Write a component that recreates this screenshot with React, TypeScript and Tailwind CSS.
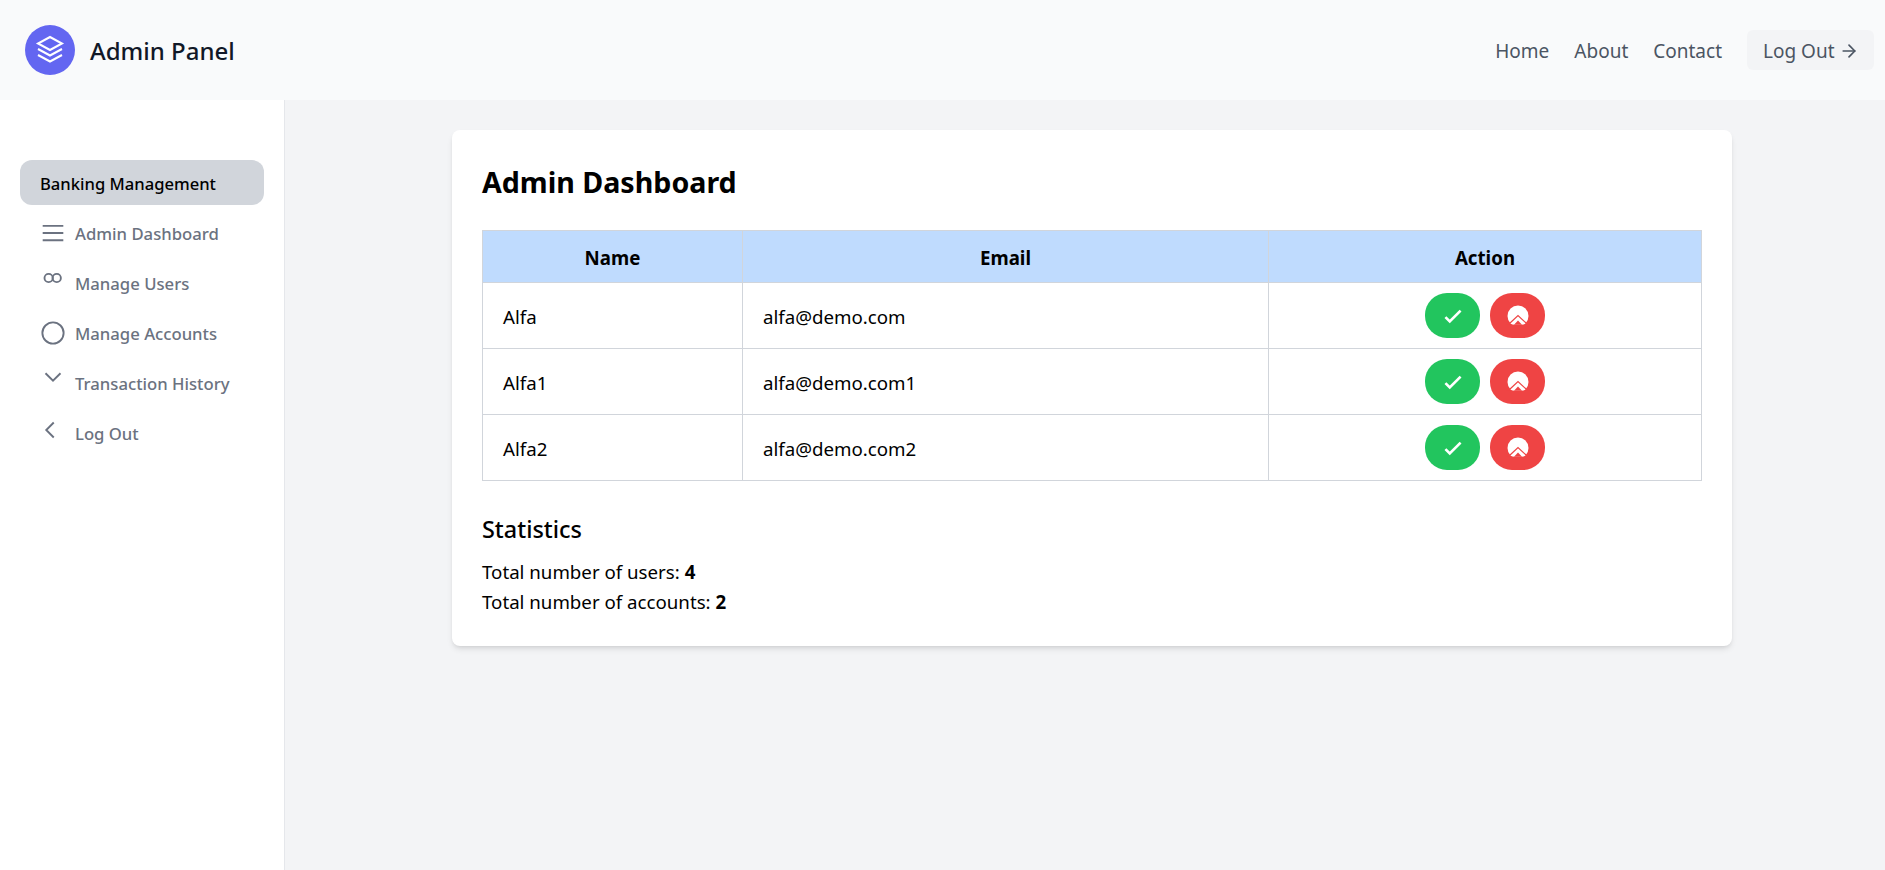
import { ArrowRight } from 'lucide-react'

const FONT = "font-['Noto_Sans',sans-serif]"

const LINK_CLS = 'text-[19px] text-[#4b5563] pt-[2px]'
const CELL_CLS = 'border border-[#d1d5db] px-5 pt-[3px]'

const USERS = [
  { name: 'Alfa', email: 'alfa@demo.com' },
  { name: 'Alfa1', email: 'alfa@demo.com1' },
  { name: 'Alfa2', email: 'alfa@demo.com2' },
]

const MENU = [
  {
    label: 'Admin Dashboard',
    icon: <path d="M3.750 6.250h16.500M3.750 12h16.500M3.750 17.750h16.500" />,
    iconCls: '',
  },
  {
    label: 'Manage Users',
    icon: (
      <>
        <circle cx="8.500" cy="12" r="3.300" />
        <circle cx="15" cy="12" r="3.300" />
      </>
    ),
    iconCls: '-translate-y-[5px]',
  },
  {
    label: 'Manage Accounts',
    icon: <circle cx="12" cy="12" r="8.500" />,
    iconCls: '',
  },
  {
    label: 'Transaction History',
    icon: <path d="M6 9l6 6 6-6" />,
    iconCls: '-translate-y-[6px]',
  },
  {
    label: 'Log Out',
    icon: <path d="M12.600 6l-6 6 6 6" />,
    iconCls: '-translate-y-[3px]',
  },
]

function CheckIcon() {
  return (
    <svg viewBox="0 0 24 24" fill="none" stroke="white" strokeWidth={2.400} className="w-[26px] h-[26px]">
      <path d="M5 13l4 4L19 7" />
    </svg>
  )
}

function BanIcon() {
  return (
    <svg viewBox="0 0 24 24" className="w-6 h-6">
      <circle cx="12" cy="12" r="10.500" fill="white" />
      <rect x="0" y="20.600" width="24" height="3.400" fill="#ef4444" />
      <path d="M3.500 19.500L12 11.500l8.500 8" fill="none" stroke="#ef4444" strokeWidth={1.200} />
      <path d="M8 20.800L12 16.500l4 4.300Z" fill="#ef4444" />
    </svg>
  )
}

export default function App() {
  return (
    <div className={`${FONT} h-[870px] flex flex-col bg-[#f3f4f6] text-black overflow-hidden`}>
      <header className="h-[100px] shrink-0 bg-[#f9fafb] flex items-center justify-between pl-[25px] pr-[11px]">
        <div className="flex items-center gap-[15px]">
          <div className="w-[50px] h-[50px] rounded-full bg-[#6366f1]">
            <svg viewBox="0 0 50 50" fill="none" stroke="white" strokeWidth={2} className="w-full h-full">
              <path d="M25 12l12 6.500-12 6.500-12-6.500Z" />
              <path d="M13 24l12 6.500 12-6.500" />
              <path d="M13 30l12 6.500 12-6.500" />
            </svg>
          </div>
          <span className="text-2xl font-medium text-[#111827] pt-[2px]">Admin Panel</span>
        </div>
        <nav className="flex items-center gap-[25px]">
          <a className={LINK_CLS}>Home</a>
          <a className={LINK_CLS}>About</a>
          <a className={LINK_CLS}>Contact</a>
          <button className="h-10 w-[127px] pl-4 pt-[2px] rounded-md bg-[#f3f4f6] flex items-center gap-1 text-[19px] text-[#4b5563]">
            Log Out <ArrowRight className="w-5 h-5" />
          </button>
        </nav>
      </header>

      <div className="flex flex-1 min-h-0">
        <aside className="w-[285px] shrink-0 bg-white border-r border-[#e5e7eb] pt-[60px] px-5">
          <div className="h-[45px] rounded-xl bg-[#d1d5db] flex items-center px-5 text-[16.6px] font-medium pt-[3px]">Banking Management</div>
          <ul className="mt-[3px]">
            {MENU.map((m) => (
              <li key={m.label} className="h-[50px] flex items-center gap-[7px] pl-[18px] text-[16.7px] font-medium text-[#6b7280]">
                <svg viewBox="0 0 24 24" fill="none" stroke="currentColor" strokeWidth={1.500} className={`w-[30px] h-[30px] shrink-0 ${m.iconCls}`}>
                  {m.icon}
                </svg>
                <span className="pt-px">{m.label}</span>
              </li>
            ))}
          </ul>
        </aside>

        <main className="flex-1 min-w-0 pt-[30px] pl-[167px] pr-[153px]">
          <div className="bg-white rounded-lg shadow-md px-[30px] pt-[30px] pb-[29px]">
            <h1 className="h-10 pt-[2px] text-[28.6px] leading-10 font-bold">Admin Dashboard</h1>
            <table className="w-full mt-[30px] border-collapse text-[18.7px] table-fixed">
              <colgroup>
                <col className="w-[260px]" />
                <col className="w-[526px]" />
                <col />
              </colgroup>
              <thead>
                <tr className="bg-[#bfdbfe] h-[52px]">
                  <th className={`${CELL_CLS} font-bold`}>Name</th>
                  <th className={`${CELL_CLS} font-bold`}>Email</th>
                  <th className={`${CELL_CLS} font-bold`}>Action</th>
                </tr>
              </thead>
              <tbody>
                {USERS.map((u) => (
                  <tr key={u.name} className="h-[66px]">
                    <td className={CELL_CLS}>{u.name}</td>
                    <td className={CELL_CLS}>{u.email}</td>
                    <td className="border border-[#d1d5db]">
                      <div className="flex items-center justify-center gap-[10px]">
                        <button className="w-[55px] h-[45px] rounded-[22px] bg-[#22c55e] flex items-center justify-center">
                          <CheckIcon />
                        </button>
                        <button className="w-[55px] h-[45px] rounded-[22px] bg-[#ef4444] flex items-center justify-center">
                          <BanIcon />
                        </button>
                      </div>
                    </td>
                  </tr>
                ))}
              </tbody>
            </table>
            <h2 className="text-[23.4px] leading-9 font-medium mt-[30px] mb-[10px]">Statistics</h2>
            <p className="text-[18.7px] leading-[30px]">Total number of users: <b>4</b></p>
            <p className="text-[18.7px] leading-[30px]">Total number of accounts: <b>2</b></p>
          </div>
        </main>
      </div>
    </div>
  )
}
